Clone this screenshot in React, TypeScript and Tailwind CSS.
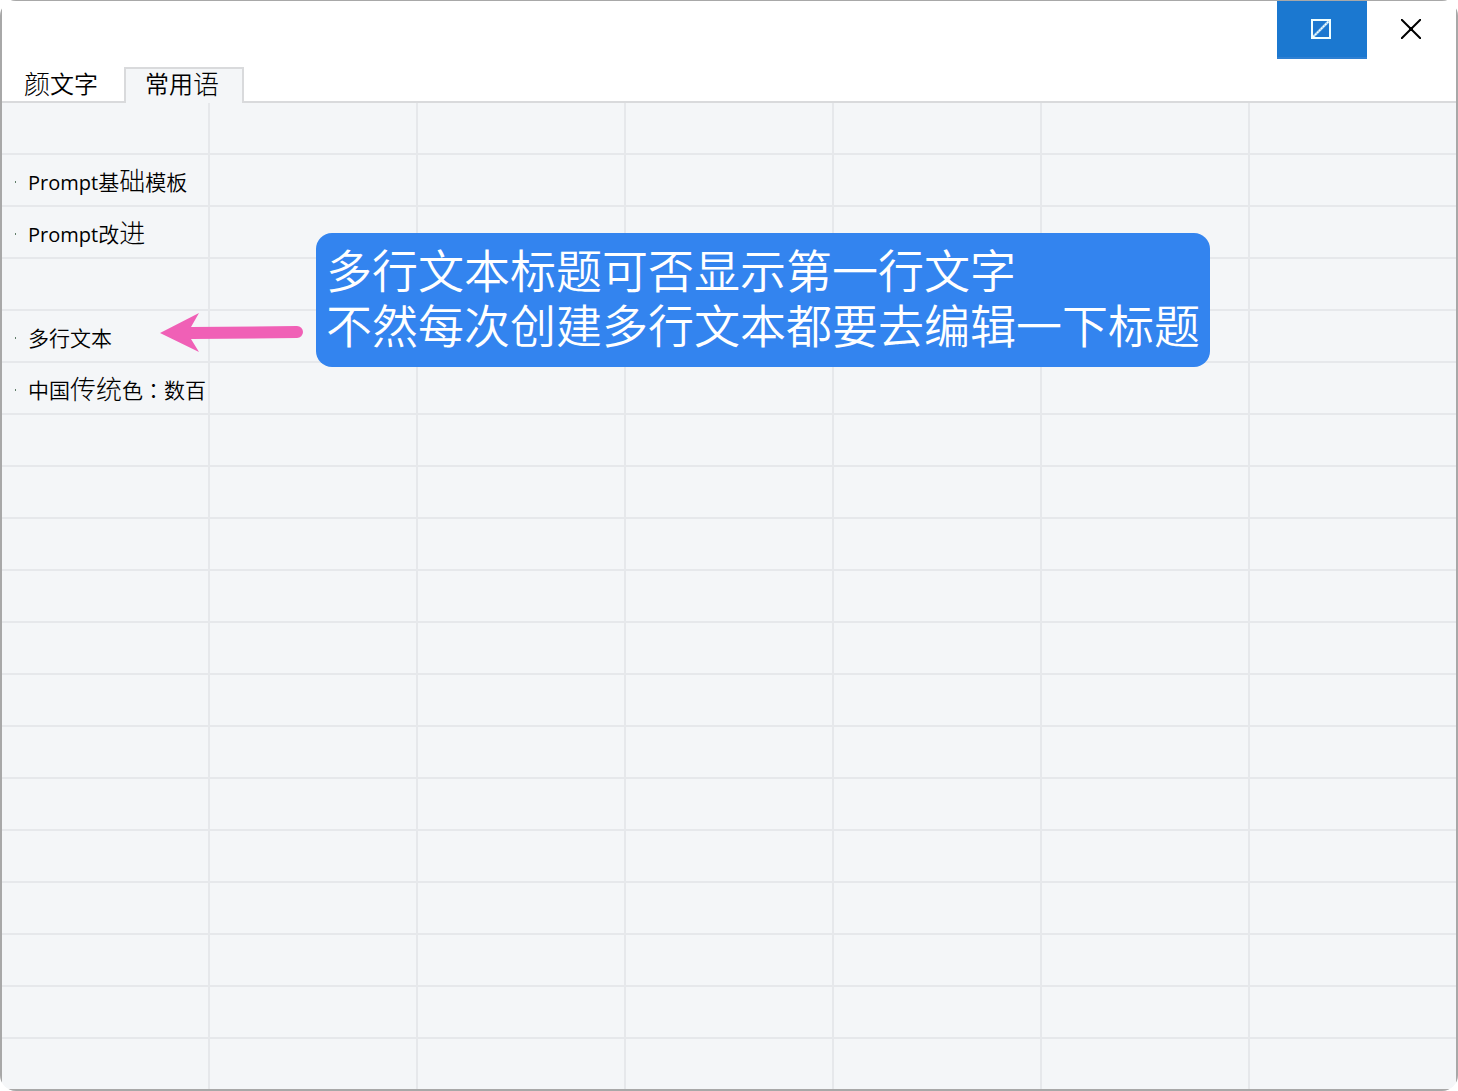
import type { ReactNode } from 'react';

const COLUMNS = 7;
const ROWS = 19;

// Characters missing from the main UI font are drawn larger and thinner.
function Alt({ children }: { children: ReactNode }) {
  return <span className="align-[-1px] text-[26px] font-light leading-none">{children}</span>;
}

function Latin({ children }: { children: ReactNode }) {
  return <span className="text-xl font-normal leading-none">{children}</span>;
}

const phrases: Record<number, ReactNode> = {
  1: <><Latin>Prompt</Latin>基<Alt>础</Alt>模板</>,
  2: <><Latin>Prompt</Latin>改<Alt>进</Alt></>,
  4: <>多行文本</>,
  5: <>中国<Alt>传统</Alt>色<span lang="zh-TW" className="font-['Noto_Sans_CJK_TC',sans-serif] leading-none">：</span>数百</>,
};

function TitleBar() {
  return (
    <header className="flex h-[58px] justify-end">
      <button type="button" aria-label="Pin" className="flex w-[90px] items-center justify-center border-b-2 border-[#2f80d2] bg-[#1b78d0] pr-0.5">
        <svg width="20" height="20" viewBox="0 0 20 20" fill="none" stroke="#f0ffff" aria-hidden>
          <rect x="1" y="1" width="18" height="18" strokeWidth="2" />
          <path d="M2 18 18 2" strokeWidth="2.6" strokeOpacity="0.45" />
          <path d="M2 18 18 2" strokeWidth="1.6" strokeDasharray="2.2 0.6" />
        </svg>
      </button>
      <button type="button" aria-label="Close" className="flex w-[89px] items-center justify-center pb-0.5 pr-0.5">
        <svg width="20" height="20" viewBox="0 0 20 20" fill="none" stroke="#000" strokeWidth="2" aria-hidden>
          <path d="M0 0 20 20M20 0 0 20" />
          <path d="M8 10h4M10 8v4" />
        </svg>
      </button>
    </header>
  );
}

function Tabs() {
  return (
    <div role="tablist" className="flex h-11 items-end border-b-2 border-[#d9dadc] text-2xl">
      <button type="button" role="tab" aria-selected={false} className="flex h-[34px] w-[122px] items-center justify-center whitespace-nowrap pr-1">
        <span className="font-[350] leading-8"><Alt>颜</Alt>文字</span>
      </button>
      <button type="button" role="tab" aria-selected className="-mb-0.5 flex h-9 w-[120px] items-center justify-center whitespace-nowrap border-2 border-b-0 border-[#d9dadc] bg-[#f4f6f8] pb-1 pr-1">
        <span className="font-[350] leading-8">常用<Alt>语</Alt></span>
      </button>
    </div>
  );
}

function PhraseGrid() {
  return (
    <table className="w-full table-fixed border-separate border-spacing-0 bg-[#f4f6f8]">
      <colgroup>
        {Array.from({ length: COLUMNS }, (_, col) => (
          <col key={col} className={col < COLUMNS - 1 ? 'w-[208px]' : ''} />
        ))}
      </colgroup>
      <tbody>
        {Array.from({ length: ROWS }, (_, row) => (
          <tr key={row} className="group">
            {Array.from({ length: COLUMNS }, (_, col) => (
              <td
                key={col}
                className="h-[52px] border-b-2 border-r-2 border-[#e6e8eb] p-0 last:border-r-0 group-last:h-[50px] group-last:border-b-0"
              >
                {col === 0 && phrases[row] && (
                  <div className="flex h-[50px] items-center pl-[13px] pt-1">
                    <span className="mr-3 h-0.5 w-px bg-[#5f7d68]" aria-hidden />
                    <span className="whitespace-nowrap text-[21px] font-[350] leading-8">{phrases[row]}</span>
                  </div>
                )}
              </td>
            ))}
          </tr>
        ))}
      </tbody>
    </table>
  );
}

function Annotation() {
  return (
    <div className="absolute left-[158px] top-[232px] flex items-start">
      <svg className="mt-20" width="156" height="40" viewBox="0 0 156 40" aria-hidden>
        <path
          d="M0 20 39 0 31 14 137 13A6 6 0 0 1 137 25L31 26 39 39Z"
          fill="#f060b6"
        />
      </svg>
      <p className="whitespace-nowrap rounded-2xl bg-[#3384ef] px-[10px] pb-3.5 pt-2.5 text-[46px] font-[350] leading-[55px] text-white">
        多行文本标题可否显示第一行文字
        <br />
        不然每次创建多行文本都要去编辑一下标题
      </p>
    </div>
  );
}

export default function App() {
  return (
    <div className="overflow-hidden rounded-2xl bg-white font-['Open_Sans','Noto_Sans_CJK_SC',sans-serif] text-black">
      <main className="relative border-2 border-t-[1px] border-[#a8a8a8]" lang="zh-CN">
        <TitleBar />
        <Tabs />
        <PhraseGrid />
        <Annotation />
      </main>
    </div>
  );
}
